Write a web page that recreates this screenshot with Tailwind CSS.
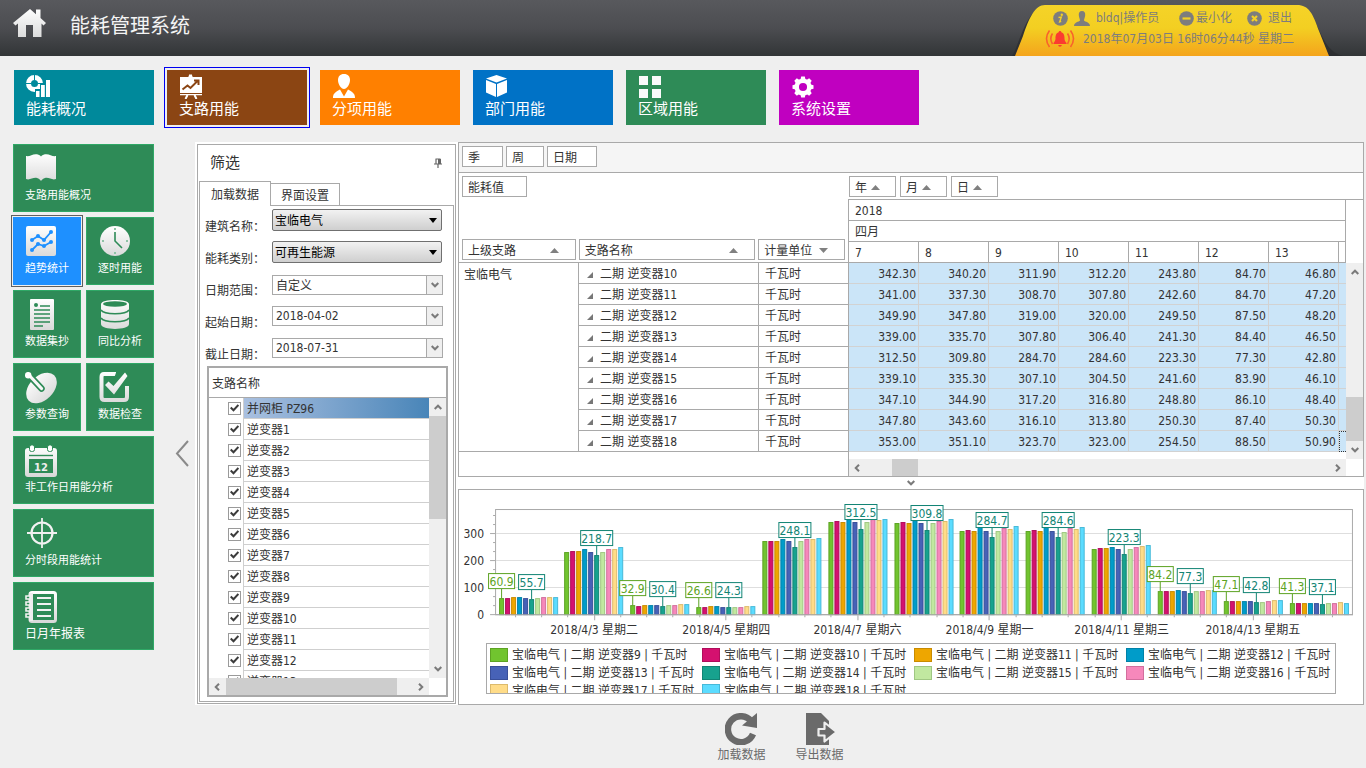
<!DOCTYPE html>
<html lang="zh-CN">
<head>
<meta charset="utf-8">
<title>能耗管理系统</title>
<script src="https://cdn.jsdelivr.net/npm/@tailwindcss/browser@4"></script>
</head>
<body class="min-h-screen bg-[#efefef] font-['DejaVu_Sans_Condensed','Noto_Sans','Noto_Sans_CJK_SC',sans-serif] text-xs leading-4 text-[#333]">

<svg class="absolute h-0 w-0" aria-hidden="true">
  <defs>
    <linearGradient id="fade" gradientUnits="userSpaceOnUse" x1="0" y1="0" x2="0" y2="32"><stop offset="0" stop-color="#fff"/><stop offset="1" stop-color="#d8d8d8"/></linearGradient>
    <linearGradient id="gold" x1="0" y1="0" x2="0" y2="1"><stop offset="0" stop-color="#f5d328"/><stop offset=".45" stop-color="#f3cf22"/><stop offset="1" stop-color="#f4a41c"/></linearGradient>
    <symbol id="up" viewBox="0 0 8 6"><path d="M.7 5 4 1.7 7.3 5" fill="none" stroke="#7a7a7a" stroke-width="2"/></symbol>
    <symbol id="down" viewBox="0 0 8 6"><path d="M.7 1 4 4.3 7.3 1" fill="none" stroke="#7a7a7a" stroke-width="2"/></symbol>
    <symbol id="left" viewBox="0 0 6 8"><path d="M5 .7 1.7 4 5 7.3" fill="none" stroke="#7a7a7a" stroke-width="2"/></symbol>
    <symbol id="right" viewBox="0 0 6 8"><path d="M1 .7 4.3 4 1 7.3" fill="none" stroke="#7a7a7a" stroke-width="2"/></symbol>
    <symbol id="asc" viewBox="0 0 9 5"><path d="M0 5 4.5 0 9 5z" fill="#808080"/></symbol>
    <symbol id="desc" viewBox="0 0 9 5"><path d="M0 0 4.500 5 9 0z" fill="#808080"/></symbol>
  </defs>
</svg>

<header class="flex h-14 justify-between bg-linear-to-b from-[#58595d] via-[#4c4d51] to-[#323537]">
  <div class="flex items-start pl-3">
    <svg class="mt-2 h-8 w-9" viewBox="0 0 36 32"><path d="M18 1 1 15l2.500 2.500L6 15.500V29h8V17h7v12h8.500V15.500l2 2L34 15l-5.500-5V1.500H24v4.700z" fill="url(#fade)"/></svg>
    <h1 class="ml-[22px] mt-2.5 text-xl leading-[30px] font-['Noto_Sans_CJK_SC',sans-serif] text-[#f4f4f4]">能耗管理系统</h1>
  </div>
  <div class="relative mr-[17px] w-[340px] text-[#7d7d7d]">
    <svg class="absolute inset-0 h-14 w-[340px]" viewBox="0 0 340 56">
      <path d="M3 56C10 46 16 12 34 6H290C310 8 308 50 334 56z" fill="#2b2c2f" opacity=".75"/>
      <path d="M6 56L14 36C20 18 26 5 36 5H288C300 5 304 14 310 31L320 56z" fill="url(#gold)"/>
    </svg>
    <div class="relative flex h-4 items-center pl-[44px] mt-[10px]">
      <svg class="size-[15px]" viewBox="0 0 15 15"><circle cx="7.500" cy="7.500" r="7.300" fill="#7d7d7d"/><circle cx="8.800" cy="3.800" r="1.200" fill="#f3d025"/><path d="m5.500 6.500 2.800-.4-1.600 4.800 1.500-.6" fill="none" stroke="#f3d025" stroke-width="1.400"/></svg>
      <svg class="ml-1.5 h-[15px] w-4" viewBox="0 0 16 15"><path d="M8 0c2.500 0 3.400 2 3.200 4.200C11 6.500 10 8 10 9.500c1 1.500 6 1.500 6 5.500H0c0-4 5-4 6-5.500C6 8 5 6.500 4.800 4.200 4.600 2 5.500 0 8 0z" fill="#7d7d7d"/></svg>
      <span class="ml-1.5 w-[83px]">bldq|操作员</span>
      <button class="flex items-center gap-0.5"><svg class="size-[15px]" viewBox="0 0 15 15"><circle cx="7.500" cy="7.500" r="7.300" fill="#7d7d7d"/><path d="M3.500 7.500h8" stroke="#f3d025" stroke-width="2.200"/></svg>最小化</button>
      <button class="ml-[15px] flex items-center gap-1.5"><svg class="size-[15px]" viewBox="0 0 15 15"><circle cx="7.500" cy="7.500" r="7.300" fill="#7d7d7d"/><path d="m5 5 5 5m0-5-5 5" stroke="#f3d025" stroke-width="2.200"/></svg>退出</button>
    </div>
    <div class="relative mt-[5px] flex h-4 items-center pl-[36px]">
      <svg class="h-5 w-[30px]" viewBox="0 0 30 20"><path d="M15 2c1 0 1.300.6 1.300 1.300 3 1 3.200 4 3.200 6.200 0 2 .8 3.200 2 4.500v1h-13v-1c1.200-1.300 2-2.500 2-4.500 0-2.200.2-5.200 3.200-6.200C13.700 2.600 14 2 15 2zM13.200 16h3.600a1.800 1.800 0 0 1-3.600 0z" fill="#fb3c30"/><path d="M7.500 4.500q-3.400 5 0 10.500M4.500 1.500q-6 8 0 16.500M22.500 4.500q3.400 5 0 10.500M25.500 1.500q6 8 0 16.500" fill="none" stroke="#f8622c" stroke-width="1.600"/></svg>
      <span class="ml-2">2018年07月03日 16时06分44秒 星期二</span>
    </div>
  </div>
</header>

<nav class="flex gap-[13px] px-[14px] pt-[14px] text-[15px] leading-5 text-white [&>button]:flex [&>button]:h-[55px] [&>button]:w-[140px] [&>button]:flex-col [&>button]:items-start [&>button]:pl-3 [&>button]:pt-[3px] [&_svg]:size-[26px]">
  <button class="bg-[#00899b]"><svg viewBox="0 0 26 26"><circle cx="8.500" cy="10.500" r="6" fill="none" stroke="#fff" stroke-width="5"/><path d="M8.500 1v6M0 10.500h5M12 10.500h6" stroke="#00899b"/><path d="M9 26V16h5v-5h5V5h6v21z" fill="#00899b"/><path d="M10 18h3.500v6H10zM15 12h3.800v12H15zM20 7h4v17h-4z" fill="#fff"/></svg>能耗概况</button>
  <button class="bg-[#8b4513] outline outline-offset-2 outline-[#0000f0]"><svg viewBox="0 0 26 26"><path d="M1 4h8.500V2.800H10V1.500h3v1.300h.5V4H23v16H1zM1 21h22v1.200H1z" fill="#fff"/><path d="m8.500 22-2 4m9-4 2 4" stroke="#fff" stroke-width="2"/><path d="m3.500 16.500 5-4 3 2.500 7-7M15 7.500h4.500V12" fill="none" stroke="#8b4513" stroke-width="2"/></svg>支路用能</button>
  <button class="bg-[#ff8000]"><svg viewBox="0 0 26 26"><path d="M12 1c4 0 6 2.600 6 6 0 4.500-3.200 9-6 9S6 11.500 6 7c0-3.400 2-6 6-6zM1 25c0-4 1.500-5.500 7-8.500l4 7 4-7c5.500 3 7 4.500 7 8.500z" fill="#fff"/></svg>分项用能</button>
  <button class="bg-[#0072c6]"><svg viewBox="0 0 26 26"><path d="M11.500 2 22 5.500 11.500 9.500 1 5.500zM1 7l10 4v13L1 19.500zM22 7l-10 4v13l10-4.500z" fill="#fff"/></svg>部门用能</button>
  <button class="bg-[#2e8b57]"><svg viewBox="0 0 26 26"><path d="M1 3h9v9H1zM14 3h9v9h-9zM1 16h9v9H1zM14 16h9v9h-9z" fill="#fafafa"/></svg>区域用能</button>
  <button class="bg-[#c000c0]"><svg viewBox="0 0 26 26"><g transform="translate(12 14)" fill="#fff"><circle r="6.300" fill="none" stroke="#fff" stroke-width="4.500"/><path id="tooth" d="M-2.500-7.500-1.800-10.500H1.800L2.500-7.500z"/><use href="#tooth" transform="rotate(45)"/><use href="#tooth" transform="rotate(90)"/><use href="#tooth" transform="rotate(135)"/><use href="#tooth" transform="rotate(180)"/><use href="#tooth" transform="rotate(225)"/><use href="#tooth" transform="rotate(270)"/><use href="#tooth" transform="rotate(315)"/></g></svg>系统设置</button>
</nav>

<main class="mt-[17px] flex items-start">
  <aside class="ml-[13px] mt-0.5 grid w-[141px] shrink-0 grid-cols-2 gap-[5px] text-[11px] text-white [&>button]:flex [&>button]:h-[68px] [&>button]:flex-col [&>button]:items-start [&>button]:border [&>button]:border-[#2fa866] [&>button]:bg-[#2e8b57] [&>button]:pl-[11px] [&>button]:pt-2 [&>button]:whitespace-nowrap [&_svg]:mb-[3px] [&_svg]:size-8 [&_svg]:shrink-0">
    <button class="col-span-2"><svg viewBox="0 0 32 32"><path d="M1 3c4 1 7-3 12-1.500 1.500.5 2 1 3 2 1-1 1.500-1.500 3-2C24 0 27 4 31 3v23c-4 1.500-7-2-11-1-2 .5-3 1.500-4 3-1-1.500-2-2.500-4-3-4-1-7 2.500-11 1z" fill="url(#fade)"/></svg>支路用能概况</button>
    <button class="border-[#1e90ff]! bg-[#1e90ff]! outline outline-offset-1 outline-[#5f5f5f]"><svg viewBox="0 0 32 32"><rect x="1" y="0" width="30" height="30" rx="2" fill="url(#fade)"/><path d="m7 14 6-4 6 4 7-8M7 24l6-6 6 2 7-4" fill="none" stroke="#1e90ff" stroke-width="1.800"/><g fill="#1e90ff"><circle cx="7" cy="14" r="2"/><circle cx="13" cy="10" r="2"/><circle cx="19" cy="14" r="2"/><circle cx="26" cy="6" r="2"/><circle cx="7" cy="24" r="2"/><circle cx="13" cy="18" r="2"/><circle cx="19" cy="20" r="2"/><circle cx="26" cy="16" r="2"/></g></svg>趋势统计</button>
    <button><svg viewBox="0 0 32 32"><circle cx="17" cy="15" r="15" fill="url(#fade)"/><path d="M17 6v9l7 7" fill="none" stroke="#2e8b57" stroke-width="1.600"/><path d="M16 2h2v2h-2zM16 26h2v2h-2zM4 14h2v2H4zM28 14h2v2h-2z" fill="#8fc3a6"/></svg>逐时用能</button>
    <button><svg viewBox="0 0 32 32"><rect x="5" width="24" height="31" rx="1" fill="url(#fade)"/><circle cx="11" cy="6" r="2" fill="#2e8b57"/><path d="M15 7h10M9 11h16M9 15h16M9 19h16M9 23h16M9 27h9" stroke="#2e8b57" stroke-width="1.400"/></svg>数据集抄</button>
    <button><svg viewBox="0 0 32 32"><path d="M3 5c0-5.500 28-5.500 28 0v20c0 6.500-28 6.500-28 0z" fill="url(#fade)"/><ellipse cx="17" cy="5" rx="12" ry="2.700" fill="#2e8b57"/><path d="M3 11c3 5 25 5 28 0M3 19c3 5 25 5 28 0" fill="none" stroke="#2e8b57" stroke-width="1.500"/></svg>同比分析</button>
    <button><svg viewBox="0 0 32 32"><ellipse cx="16.500" cy="16" rx="18" ry="12" transform="rotate(-45 16.500 16)" fill="url(#fade)"/><path d="m3 2 13.500 14.500" stroke="#2e8b57" stroke-width="6.500" stroke-linecap="round"/><path d="m3 2 13.500 14.500" stroke="#f7f7f7" stroke-width="3.200" stroke-linecap="round"/><circle cx="3.200" cy="3.200" r="3.200" fill="#fff"/></svg>参数查询</button>
    <button><svg viewBox="0 0 32 32"><path d="M18 2H6Q3.500 2 3.500 5v20q0 3 3 3H26q3 0 3-3V14" fill="none" stroke="url(#fade)" stroke-width="4"/><path d="M19-2 24 0 15 9z" fill="#2e8b57"/><path d="m7 13 3.500-3.500 5 4.500L27 .5 29.500 4 16 22.500z" fill="url(#fade)"/></svg>数据检查</button>
    <button class="col-span-2"><svg viewBox="0 0 32 32"><path d="M0 6q0-3 3-3h26q3 0 3 3v23q0 3-3 3H3q-3 0-3-3z" fill="url(#fade)"/><path d="M4 10.500h24" stroke="#2e8b57" stroke-width="1.400"/><path d="M4 14h24v14H4z" fill="#2e8b57"/><rect x="4.500" y="0" width="5" height="6.500" rx="2" fill="#fff" stroke="#2e8b57"/><rect x="22.500" y="0" width="5" height="6.500" rx="2" fill="#fff" stroke="#2e8b57"/><text x="16" y="25.500" text-anchor="middle" font-family="DejaVu Sans" font-weight="bold" font-size="10" fill="#eee">12</text></svg>非工作日用能分析</button>
    <button class="col-span-2"><svg viewBox="0 0 32 32"><circle cx="17" cy="15" r="10.500" fill="none" stroke="#f2f2f2" stroke-width="2.200"/><path d="M17 0v30M2 15h30" stroke="#f0f0f0" stroke-width="1.800"/></svg>分时段用能统计</button>
    <button class="col-span-2 text-xs"><svg viewBox="0 0 32 32"><rect x="5" y="1.500" width="25.500" height="29" rx="2" fill="none" stroke="url(#fade)" stroke-width="3"/><path d="M6 2v28" stroke="#eee" stroke-width="4"/><path d="M1 5h4v3H1zM1 11h4v3H1zM1 17h4v3H1zM1 23h4v3H1z" fill="#2e8b57" stroke="#f2f2f2" stroke-width="1.600"/><path d="M12 7h14M12 13h14M12 19h14M12 25h14" stroke="#f2f2f2" stroke-width="2"/></svg>日月年报表</button>
  </aside>
  <button class="mt-[298px] flex w-[41px] shrink-0 justify-center pl-3.5" aria-label="收起"><svg class="h-[27px] w-3.5" viewBox="0 0 14 27"><path d="M13 1 2 13.500 13 26" fill="none" stroke="#8a8a8a" stroke-width="2"/></svg></button>

  <div class="min-w-0 flex-1">
    <div class="mr-[2px] flex bg-white">
      <section class="mx-0.5 mt-0.5 mb-px flex w-[259px] shrink-0 flex-col border border-[#a9a9a9] px-px pb-px">
        <div class="flex h-9 items-center justify-between pl-[11px] pr-3">
          <h2 class="text-[15px] leading-5">筛选</h2>
          <svg class="h-2.5 w-2" viewBox="0 0 8 10"><path d="M1.500 1h5M2 1v5M0 6h8M4 6v4" fill="none" stroke="#666" stroke-width="1.200"/><path d="M4 1h3v5H4z" fill="#666"/></svg>
        </div>
        <div class="flex items-end">
          <button class="h-[25px] w-[72px] border border-b-0 border-[#a9a9a9] pt-0.5">加载数据</button>
          <button class="h-[23px] w-[69px] border border-l-0 border-[#a9a9a9] pt-0.5">界面设置</button>
          <div class="h-px flex-1 bg-[#a9a9a9]"></div>
        </div>
        <div class="border border-t-0 border-[#a9a9a9] pb-1 px-[5px] pt-[3px]">
          <div class="[&>div]:flex [&>div]:h-8 [&>div]:items-start [&_label]:w-[67px] [&_label]:pt-2.5">
            <div><label for="bld">建筑名称：</label>
              <div class="relative"><select id="bld" class="h-[22px] w-[170px] appearance-none rounded-xs border border-[#707070] bg-linear-to-b from-[#f2f2f2] to-[#cfcfcf] pl-0.5 pt-0.5 text-black"><option>宝临电气</option></select><svg class="pointer-events-none absolute right-[5px] top-[9px] h-[5px] w-2" viewBox="0 0 8 5"><path d="M0 0h8L4 5z"/></svg></div></div>
            <div><label for="kind">能耗类别：</label>
              <div class="relative"><select id="kind" class="h-[22px] w-[170px] appearance-none rounded-xs border border-[#707070] bg-linear-to-b from-[#f2f2f2] to-[#cfcfcf] pl-0.5 pt-0.5 text-black"><option>可再生能源</option></select><svg class="pointer-events-none absolute right-[5px] top-[9px] h-[5px] w-2" viewBox="0 0 8 5"><path d="M0 0h8L4 5z"/></svg></div></div>
            <div><label for="range">日期范围：</label>
              <div class="mt-0.5 flex h-5 w-[171px] border border-[#a9a9a9]"><input id="range" class="min-w-0 flex-1 pl-[3px] pt-0.5" value="自定义"><button class="flex w-4 items-center justify-center border-l border-[#a9a9a9] bg-[#efefef]" aria-label="展开"><svg class="h-1.5 w-2"><use href="#down"/></svg></button></div></div>
            <div><label for="from">起始日期：</label>
              <div class="mt-px flex h-5 w-[171px] border border-[#a9a9a9]"><input id="from" class="min-w-0 flex-1 pl-[3px]" value="2018-04-02"><button class="flex w-4 items-center justify-center border-l border-[#a9a9a9] bg-[#efefef]" aria-label="展开"><svg class="h-1.5 w-2"><use href="#down"/></svg></button></div></div>
            <div class="h-[29px]!"><label for="to">截止日期：</label>
              <div class="mt-px flex h-5 w-[171px] border border-[#a9a9a9]"><input id="to" class="min-w-0 flex-1 pl-[3px]" value="2018-07-31"><button class="flex w-4 items-center justify-center border-l border-[#a9a9a9] bg-[#efefef]" aria-label="展开"><svg class="h-1.5 w-2"><use href="#down"/></svg></button></div></div>
          </div>
          <div class="ml-0.5 border-2 border-[#a9a9a9]">
            <div class="flex h-[30px] items-center border-b border-[#a9a9a9] pl-[3px] pt-0.5">支路名称</div>
            <div class="flex h-[280px]">
              <div id="branches" class="min-w-0 flex-1 overflow-hidden"></div>
              <div class="flex w-[17px] flex-col items-center bg-[#efefef]">
                <svg class="my-1.5 h-1.5 w-2 shrink-0"><use href="#up"/></svg>
                <div class="h-[103px] w-full bg-[#cdcdcd]"></div>
                <svg class="mb-1.5 mt-auto h-1.5 w-2 shrink-0"><use href="#down"/></svg>
              </div>
            </div>
            <div class="mr-[17px] flex h-[17px] items-center bg-[#efefef]">
              <svg class="ml-[5px] mr-1.5 h-2 w-1.5"><use href="#left"/></svg>
              <div class="h-full w-[171px] bg-[#cdcdcd]"></div>
              <svg class="ml-auto mr-[5px] h-2 w-1.5"><use href="#right"/></svg>
            </div>
          </div>
        </div>
      </section>

      <div class="flex min-w-0 flex-1 flex-col">
        <section class="border border-[#a9a9a9]">
          <div class="flex h-[30px] gap-[3px] border-b border-[#a9a9a9] bg-[#f5f5f5] pl-[3px] pt-[3px] [&>button]:h-[21px] [&>button]:border [&>button]:border-[#a9a9a9] [&>button]:bg-white [&>button]:pl-[5px] [&>button]:pt-0.5 [&>button]:text-left">
            <button class="w-[41px]">季</button><button class="w-[38px]">周</button><button class="w-[50px]">日期</button>
          </div>
          <div class="flex">
            <div class="w-[389px] shrink-0">
              <div class="flex h-[90px] flex-col justify-between border-b border-[#a9a9a9] px-[3px] pb-0.5 pt-[3px] [&_button]:flex [&_button]:h-[21px] [&_button]:items-center [&_button]:justify-between [&_button]:border [&_button]:border-[#a9a9a9] [&_button]:pl-[5px] [&_button]:pt-0.5">
                <button class="w-[65px]">能耗值</button>
                <div class="flex gap-[3px]">
                  <button class="w-[114px]">上级支路<svg class="mr-4 h-[5px] w-[9px]"><use href="#asc"/></svg></button>
                  <button class="w-[177px]">支路名称<svg class="mr-4 h-[5px] w-[9px]"><use href="#asc"/></svg></button>
                  <button class="w-[87px]">计量单位<svg class="mr-4 h-[5px] w-[9px]"><use href="#desc"/></svg></button>
                </div>
              </div>
              <table class="w-full table-fixed border-separate border-spacing-0">
                <colgroup><col class="w-[120px]"><col class="w-[180px]"><col></colgroup>
                <tbody id="rowHeads"></tbody>
              </table>
            </div>
            <div class="min-w-0 flex-1">
              <div class="flex h-[27px] gap-1 border-b border-[#a9a9a9] pl-px pt-[3px] [&>button]:flex [&>button]:h-[21px] [&>button]:w-[47px] [&>button]:items-center [&>button]:gap-1 [&>button]:border [&>button]:border-[#a9a9a9] [&>button]:pl-[5px] [&>button]:pt-0.5">
                <button>年<svg class="h-[5px] w-[9px]"><use href="#asc"/></svg></button>
                <button>月<svg class="h-[5px] w-[9px]"><use href="#asc"/></svg></button>
                <button>日<svg class="h-[5px] w-[9px]"><use href="#asc"/></svg></button>
              </div>
              <div class="flex border-l border-[#a9a9a9]">
                <div class="min-w-0 flex-1">
                  <table class="w-full table-fixed border-separate border-spacing-0">
                    <colgroup><col class="w-[70px]"><col class="w-[70px]"><col class="w-[70px]"><col class="w-[70px]"><col class="w-[70px]"><col class="w-[70px]"><col class="w-[70px]"><col></colgroup>
                    <thead id="dayHeads" class="[&_th]:h-[21px] [&_th]:border-b [&_th]:border-r [&_th]:border-[#a9a9a9] [&_th]:pb-0 [&_th]:pt-0.5 [&_th]:pl-1.5 [&_th]:text-left [&_th]:font-normal">
                      <tr><th colspan="8">2018</th></tr>
                      <tr><th colspan="8">四月</th></tr>
                      <tr><th>7</th><th>8</th><th>9</th><th>10</th><th>11</th><th>12</th><th>13</th><th></th></tr>
                    </thead>
                    <tbody id="values" class="bg-[#cbe5f8]"></tbody>
                  </table>
                  <div class="mt-[7px] flex h-[17px] items-center bg-[#efefef]">
                    <svg class="ml-[5px] mr-8 h-2 w-1.5"><use href="#left"/></svg>
                    <div class="h-full w-[26px] bg-[#cdcdcd]"></div>
                    <svg class="ml-auto mr-[5px] h-2 w-1.5"><use href="#right"/></svg>
                  </div>
                </div>
                <div class="flex w-[17px] shrink-0 flex-col pb-[17px] pt-[63px]">
                  <div class="flex flex-1 flex-col items-center bg-[#efefef]">
                    <svg class="mt-1.5 h-1.5 w-2"><use href="#up"/></svg>
                    <div class="mt-auto h-11 w-full bg-[#cdcdcd]"></div>
                    <svg class="my-1.5 h-1.5 w-2"><use href="#down"/></svg>
                  </div>
                </div>
              </div>
            </div>
          </div>
        </section>
        <div class="flex h-3 items-center justify-center"><svg class="h-1.5 w-2"><use href="#down"/></svg></div>
        <section class="border border-[#a9a9a9] pb-[10px]">
          <svg id="chart" class="block w-full" viewBox="459 490 903 153" role="img" aria-label="能耗柱状图"></svg>
          <ul id="legend" class="mx-[27px] grid h-[51px] grid-cols-[repeat(4,212px)] auto-rows-[18px] overflow-hidden border border-[#a9a9a9] pl-[3px] pt-0.5"></ul>
        </section>
      </div>
    </div>
    <footer class="mt-2 flex justify-center gap-[30px] text-[#6a6a6a] [&>button]:flex [&>button]:flex-col [&>button]:items-center [&>button]:gap-0.5 [&_svg]:h-8 [&_svg]:w-8">
      <button><svg viewBox="0 0 32 32"><path d="M26 8A13 13 0 1 0 28 21" fill="none" stroke="#6a6a6a" stroke-width="6.500"/><path d="M32 0v15l-15-2.500z" fill="#6a6a6a"/></svg>加载数据</button>
      <button><svg viewBox="0 0 32 32"><path d="M2 0h15l8 8v24H2z" fill="#6a6a6a"/><path d="M14.500 16H20.500V9.500L32.500 19 20.500 28.500V22.500h-6z" fill="#6a6a6a" stroke="#efefef" stroke-width="2.200" stroke-linejoin="round"/><path d="M25 26v6h6v-6z" fill="#efefef"/></svg>导出数据</button>
    </footer>
  </div>
</main>

<script>
const names = ['并网柜 PZ96'];
for (let i = 1; i <= 13; i++) names.push('逆变器' + i);
document.getElementById('branches').innerHTML = names.map((n, i) => `
  <div class="flex h-[21px]">
    <div class="relative flex w-[34px] items-center justify-end pr-0.5">
      <input id="b${i}" type="checkbox" checked class="size-[13px] appearance-none border border-[#9a9a9a] bg-white">
      <svg class="pointer-events-none absolute right-1 top-1.5 h-2 w-[9px]" viewBox="0 0 9 8"><path d="M.7 3.500 3.500 6.300 8.400 1" fill="none" stroke="#3c3c3c" stroke-width="2"/></svg>
    </div>
    <label for="b${i}" class="flex flex-1 items-center border-b border-l border-[#cfcfcf] pl-[3px] pt-0.5 ${i ? '' : 'bg-linear-to-r from-[#a9c0e0] to-[#4885b8]'}">${n}</label>
  </div>`).join('');

const grid = [
  '342.30 340.20 311.90 312.20 243.80 84.70 46.80', '341.00 337.30 308.70 307.80 242.60 84.70 47.20',
  '349.90 347.80 319.00 320.00 249.50 87.50 48.20', '339.00 335.70 307.80 306.40 241.30 84.40 46.50',
  '312.50 309.80 284.70 284.60 223.30 77.30 42.80', '339.10 335.30 307.10 304.50 241.60 83.90 46.10',
  '347.10 344.90 317.20 316.80 248.80 86.10 48.40', '347.80 343.60 316.10 313.80 250.30 87.40 50.30',
  '353.00 351.10 323.70 323.00 254.50 88.50 50.90'];
document.getElementById('rowHeads').innerHTML = grid.map((_, i) => `<tr>
  ${i ? '' : '<th rowspan="9" class="border-b border-r border-[#a9a9a9] pl-[5px] pt-1 text-left align-top font-normal">宝临电气</th>'}
  <th class="h-[21px] border-b border-r border-[#a9a9a9] pb-0 pt-0.5 pl-2 text-left font-normal"><svg class="mr-[7px] inline h-1.5 w-1.5" viewBox="0 0 6 6"><path d="M6 0v6H0z" fill="#777"/></svg>二期 逆变器${10 + i}</th>
  <td class="h-[21px] border-b border-[#a9a9a9] pb-0 pt-0.5 pl-1.5">千瓦时</td></tr>`).join('');
document.getElementById('values').innerHTML = grid.map((r, i) => '<tr>' + r.split(' ').map(v =>
  `<td class="h-[21px] border-b border-r border-[#d2d2d2] pb-0 pt-0.5 pr-0.5 text-right">${v}</td>`).join('') +
  (i < 8 ? '<td class="border-b border-[#d2d2d2] p-0"></td>' : '<td class="border border-r-0 border-dotted border-[#333] p-0"></td>') + '</tr>').join('');

const fills = ['#71c42f', '#d4116f', '#eea600', '#009cc9', '#4762b7', '#17a28e', '#c1e8a0', '#f688bb', '#ffdc88', '#5bdcff'];
const edges = ['#5da323', '#b00d5b', '#c88b00', '#0082a8', '#394f99', '#128474', '#a0c783', '#d26f9d', '#dcba6c', '#47b9d8'];
/* bar heights in chart units, one row per day */
const days = [
  [16,16,17,17,16,15,16,17,17,17], [62,63,63,65,62,59,62,65,65,67], [9,8,9,9,9,8,9,9,10,10], [7,7,8,8,7,7,7,7,8,8],
  [73,73,73,75,73,67,73,75,75,76], [92,93,92,95,92,85,92,95,94,95], [91,92,91,94,91,84,91,93,93,95],
  [83,84,83,87,83,77,83,86,85,88], [83,84,83,87,83,77,82,86,85,87], [65,66,66,67,65,60,65,67,68,69],
  [23,23,23,24,23,21,23,23,24,24], [13,13,13,13,13,12,12,13,14,14], [11,11,11,11,11,10,11,11,12,11]];
const marks = [['60.9','55.7'],['','218.7'],['32.9','30.4'],['26.6','24.3'],['','248.1'],['','312.5'],['','309.8'],
  ['','284.7'],['','284.6'],['','223.3'],['84.2','77.3'],['47.1','42.8'],['41.3','37.1']];
const base = 613;
const text = (x, y, s, anchor, fill) => `<text x="${x}" y="${y}" text-anchor="${anchor}" fill="${fill}">${s}</text>`;
const line = (x1, y1, x2, y2, c) => `<path d="M${x1} ${y1}L${x2} ${y2}" stroke="${c}"/>`;
let out = '<rect x="495.5" y="509.5" width="856" height="105" fill="none" stroke="#a9a9a9"/>';
for (let i = 0; i < 12; i++) {
  const y = 614.5 - i * 9, major = i % 3 === 0;
  out += line(major ? 490 : 493, y, 495, y, '#a9a9a9');
  if (major) {
    if (i) out += line(496, y, 1351, y, '#dedede');
    out += text(484, y + 4, i / 3 * 100, 'end', '#333');
  }
}
['2018/4/3 星期二', '2018/4/5 星期四', '2018/4/7 星期六', '2018/4/9 星期一', '2018/4/11 星期三', '2018/4/13 星期五']
  .forEach((s, i) => { out += text(Math.round(594 + i * 131.65), 634, s, 'middle', '#333'); });
for (let k = -3; k < 29; k++) {
  const x = Math.floor(594 + k * 26.33) + 0.5;
  out += line(x, 615, x, k % 5 === 0 ? 620 : 617, '#a9a9a9');
}
const starts = days.map((_, g) => Math.floor(499 + g * 65.85));
days.forEach((d, g) => d.forEach((h, b) => {
  out += `<rect x="${starts[g] + b * 6 + 0.5}" y="${base - h + 1.5}" width="4" height="${h}" fill="${fills[b]}" stroke="${edges[b]}"/>`;
}));
out += line(495, 614.5, 1352, 614.5, '#a9a9a9');
marks.forEach((m, g) => m.forEach((s, j) => {
  if (!s) return;
  const b = j ? 5 : 0, cx = starts[g] + b * 6 + 2.5, top = 614 - days[g][b];
  const w = s.length > 4 ? 32 : 26, c = j ? '#128474' : '#5da323';
  out += line(cx, top - 9, cx, top, c) +
    `<rect x="${cx - w / 2}" y="${top - 24.5}" width="${w}" height="15" fill="#fff" stroke="${c}"/>` + text(cx, top - 12, s, 'middle', c);
}));
const chart = document.getElementById('chart');
chart.innerHTML = `<g font-size="12">${out}</g>`;

document.getElementById('legend').innerHTML = fills.map((c, i) =>
  `<li class="flex items-center gap-1 whitespace-nowrap"><span class="h-3.5 w-[18px] border" style="background:${c};border-color:${edges[i]}"></span>宝临电气 | 二期 逆变器${i + 9} | 千瓦时</li>`).join('');
</script>
</body>
</html>
